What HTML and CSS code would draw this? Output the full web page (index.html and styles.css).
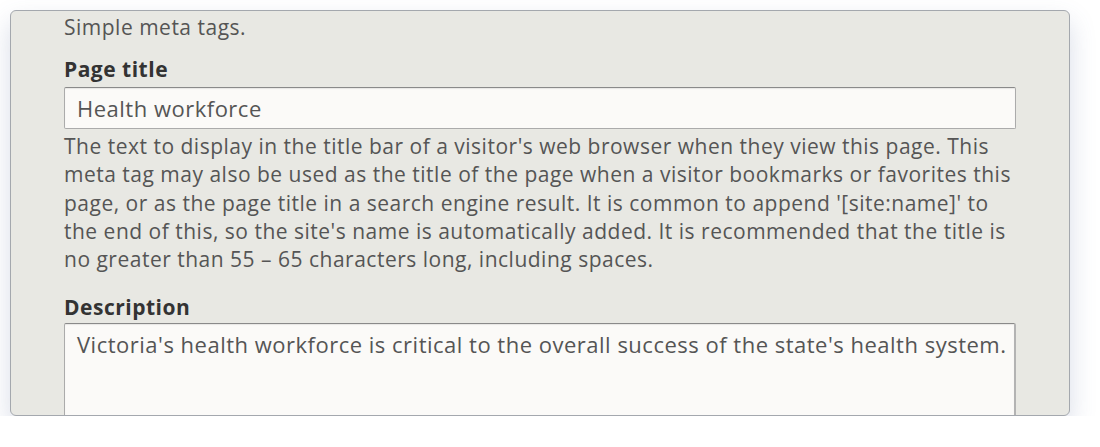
FILE: index.html
```html
<!DOCTYPE html>
<html lang="en">
<head>
<meta charset="utf-8">
<title>Simple meta tags</title>
<link rel="stylesheet" href="styles.css">
</head>
<body>
<div class="card">
  <div class="content">
    <p class="intro">Simple meta tags.</p>
    <div class="field">
      <label class="label label-title" for="title">Page title</label>
      <div class="input" id="title">Health workforce</div>
      <p class="help">The text to display in the title bar of a visitor's web browser when they view this page. This meta tag may also be used as the title of the page when a visitor bookmarks or favorites this page, or as the page title in a search engine result. It is common to append '[site:name]' to the end of this, so the site's name is automatically added. It is recommended that the title is no greater than 55 – 65 characters long, including spaces.</p>
    </div>
    <div class="field">
      <label class="label label-desc" for="desc">Description</label>
      <div class="textarea" id="desc">Victoria's health workforce is critical to the overall success of the state's health system.</div>
    </div>
  </div>
</div>
</body>
</html>
```

FILE: styles.css
```css
html, body {
  margin: 0;
  padding: 0;
  background: #ffffff;
}
body {
  font-family: "Open Sans", sans-serif;
  font-size: 21px;
  letter-spacing: 0.5px;
  color: #555555;
}
.card {
  margin: 10px 0 0 10px;
  width: 1060px;
  height: 406px;
  border: 1px solid #a4a8ae;
  border-radius: 6px;
  background: #e8e8e3;
  box-shadow: 0 12px 26px rgba(80, 100, 150, 0.22);
  overflow: hidden;
  box-sizing: border-box;
}
.content {
  padding: 3px 0 0 53px;
  width: 952px;
}
.intro {
  margin: 0 0 17px;
  line-height: 26px;
  color: #555555;
}
.field {
  display: flex;
  flex-direction: column;
}
.label {
  font-weight: bold;
  color: #333333;
  line-height: 24px;
}
.label-title {
  margin-bottom: 6px;
}
.label-desc {
  margin-bottom: 4px;
}
.input {
  height: 42px;
  box-sizing: border-box;
  border: 1px solid #ababab;
  border-top-color: #8a8a8a;
  border-radius: 2px;
  background: #fbfaf8;
  padding: 0 6px 0 12px;
  font-size: 22px;
  letter-spacing: 0.5px;
  line-height: 40px;
  color: #555555;
  box-shadow: inset 0 1px 1px rgba(0,0,0,0.08);
}
.help {
  margin: 3px 0 21px;
  line-height: 28.33px;
  color: #555555;
}
.textarea {
  height: 120px;
  box-sizing: border-box;
  border: 1px solid #ababab;
  border-top-color: #8a8a8a;
  border-right: 2px solid #b3b3b3;
  border-radius: 2px;
  background: #fbfaf8;
  padding: 6px 6px 6px 12px;
  font-size: 22px;
  letter-spacing: 0.5px;
  line-height: 28.33px;
  color: #555555;
  box-shadow: inset 0 1px 1px rgba(0,0,0,0.08);
}
```
